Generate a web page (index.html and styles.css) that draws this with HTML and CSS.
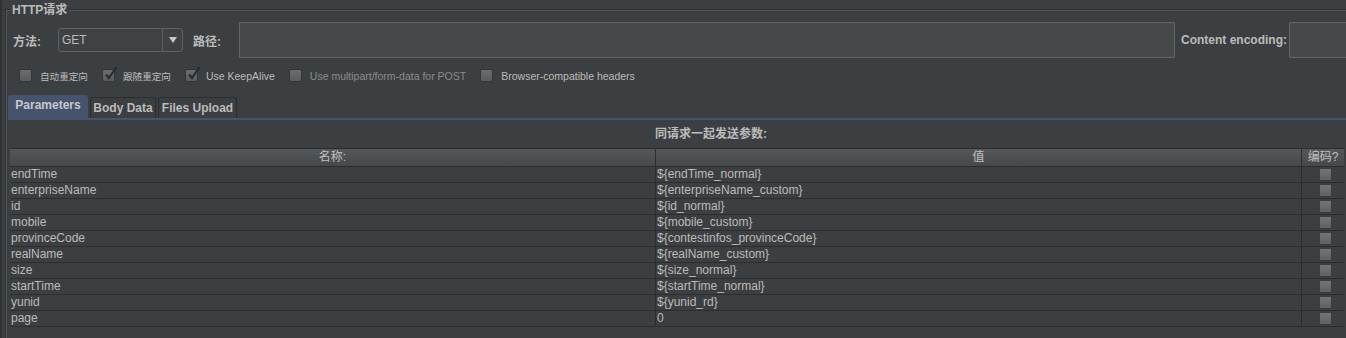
FILE: index.html
```html
<!DOCTYPE html>
<html>
<head>
<meta charset="utf-8">
<link rel="stylesheet" href="styles.css">
</head>
<body>
<div class="group">
  <div class="group-title">HTTP请求</div>
  <div class="row-req">
    <span class="lbl lbl-method">方法:</span>
    <div class="combo">
      <span class="combo-val">GET</span>
      <span class="combo-btn"><svg width="8" height="6" viewBox="0 0 8 6"><path d="M0 0 H8 L4 6 Z" fill="#c8c8c8"/></svg></span>
    </div>
    <span class="lbl lbl-path">路径:</span>
    <div class="input input-path"></div>
    <span class="lbl lbl-enc">Content encoding:</span>
    <div class="input input-enc"></div>
  </div>
  <div class="row-opts">
    <label class="opt"><span class="cb"></span><span class="opt-txt cjk">自动重定向</span></label>
    <label class="opt"><span class="cb"><svg class="chk" width="15" height="16" viewBox="0 0 15 16"><path d="M3 8.5 L6 12 L13.5 1" fill="none" stroke="#2a2b2c" stroke-width="2.2"/></svg></span><span class="opt-txt cjk">跟随重定向</span></label>
    <label class="opt"><span class="cb"><svg class="chk" width="15" height="16" viewBox="0 0 15 16"><path d="M3 8.5 L6 12 L13.5 1" fill="none" stroke="#2a2b2c" stroke-width="2.2"/></svg></span><span class="opt-txt">Use KeepAlive</span></label>
    <label class="opt"><span class="cb"></span><span class="opt-txt dis">Use multipart/form-data for POST</span></label>
    <label class="opt"><span class="cb"></span><span class="opt-txt">Browser-compatible headers</span></label>
  </div>
  <div class="tabs">
    <div class="tab sel">Parameters</div>
    <div class="tab t-body">Body Data</div>
    <div class="tab t-files">Files Upload</div>
  </div>
  <div class="tab-panel">
    <div class="panel-title">同请求一起发送参数:</div>
    <div class="table">
      <div class="th">名称:</div><div class="th">值</div><div class="th th-enc">编码?</div>

      <div class="td">endTime</div><div class="td">${endTime_normal}</div><div class="td tc"><span class="tcb"></span></div>
      <div class="td">enterpriseName</div><div class="td">${enterpriseName_custom}</div><div class="td tc"><span class="tcb"></span></div>
      <div class="td">id</div><div class="td">${id_normal}</div><div class="td tc"><span class="tcb"></span></div>
      <div class="td">mobile</div><div class="td">${mobile_custom}</div><div class="td tc"><span class="tcb"></span></div>
      <div class="td">provinceCode</div><div class="td">${contestinfos_provinceCode}</div><div class="td tc"><span class="tcb"></span></div>
      <div class="td">realName</div><div class="td">${realName_custom}</div><div class="td tc"><span class="tcb"></span></div>
      <div class="td">size</div><div class="td">${size_normal}</div><div class="td tc"><span class="tcb"></span></div>
      <div class="td">startTime</div><div class="td">${startTime_normal}</div><div class="td tc"><span class="tcb"></span></div>
      <div class="td">yunid</div><div class="td">${yunid_rd}</div><div class="td tc"><span class="tcb"></span></div>
      <div class="td">page</div><div class="td">0</div><div class="td tc"><span class="tcb"></span></div>
    </div>
  </div>
</div>
</body>
</html>
```

FILE: styles.css
```css
html, body {
  margin: 0;
  padding: 0;
}
body {
  width: 1346px;
  height: 338px;
  overflow: hidden;
  background: #3c3f41;
  color: #bbbbbb;
  font-family: "Liberation Sans", "Noto Sans CJK SC", sans-serif;
  font-size: 12px;
  box-shadow: inset 2px 0 0 #2f3133;
}
.group {
  position: relative;
  margin: 9px 0 0 5px;
  width: 1341px;
  height: 329px;
  border-top: 1px solid #2e3032;
  border-left: 1px solid #2e3032;
  box-shadow: inset 1px 1px 0 #55585a;
  box-sizing: border-box;
  padding-top: 12px;
}
.group-title {
  position: absolute;
  left: 5px;
  top: -8px;
  padding: 0 2px 0 1px;
  background: #3c3f41;
  font-weight: bold;
  font-size: 12px;
  line-height: 16px;
  color: #bbbbbb;
}
.row-req {
  display: flex;
  align-items: center;
  height: 36px;
}
.lbl {
  font-weight: bold;
  white-space: nowrap;
  flex: none;
}
.lbl-method {
  margin-left: 7px;
  width: 45px;
}
.combo {
  flex: none;
  display: flex;
  width: 125px;
  height: 24px;
  box-sizing: border-box;
  border: 1px solid #5e6163;
  border-radius: 3px;
  background: #3f4244;
}
.combo-val {
  flex: 1;
  padding-left: 3px;
  line-height: 22px;
  color: #bbbbbb;
}
.combo-btn {
  width: 19px;
  border-left: 1px solid #5e6163;
  display: flex;
  align-items: center;
  justify-content: center;
}
.lbl-path {
  margin-left: 10px;
  width: 46px;
}
.input {
  flex: none;
  height: 36px;
  box-sizing: border-box;
  border: 1px solid #646464;
  background: #45494a;
}
.input-path {
  width: 936px;
}
.lbl-enc {
  margin-left: 6px;
  width: 108px;
}
.input-enc {
  width: 58px;
  border-right: none;
}
.row-opts {
  display: flex;
  align-items: center;
  margin-top: 11px;
  height: 13px;
  padding-left: 13px;
}
.opt {
  display: flex;
  align-items: center;
  margin-right: 14px;
}
.cb {
  position: relative;
  width: 13px;
  height: 13px;
  box-sizing: border-box;
  border: 1px solid #333537;
  border-radius: 2px;
  background: linear-gradient(#6a6d6f, #5a5d5f);
}
.chk {
  position: absolute;
  left: 0;
  top: -4px;
}
.opt-txt {
  margin-left: 8px;
  font-size: 10.5px;
  color: #bbbbbb;
  white-space: nowrap;
}
.opt-txt.cjk {
  font-size: 9.6px;
}
.opt-txt.dis {
  color: #8a8c8e;
}
.tabs {
  display: flex;
  align-items: flex-end;
  margin-top: 13px;
  margin-left: 2px;
  height: 23px;
}
.tab {
  height: 21px;
  box-sizing: border-box;
  border: 1px solid #2b2d2e;
  border-bottom: none;
  border-radius: 3px 3px 0 0;
  margin-left: 2px;
  font-weight: bold;
  line-height: 21px;
  text-align: center;
  color: #bbbbbb;
}
.tab.sel {
  height: 23px;
  width: 80px;
  margin-left: 0;
  border: none;
  background: #46536c;
  line-height: 20px;
  color: #c4c8cc;
}
.t-body {
  width: 66px;
}
.t-files {
  width: 79px;
}
.tab-panel {
  margin-left: 2px;
  border-top: 2px solid #46536c;
  padding-left: 2px;
}
.panel-title {
  width: 1336px;
  box-sizing: border-box;
  padding-left: 66px;
  height: 28px;
  line-height: 28px;
  text-align: center;
  font-weight: bold;
}
.table {
  display: grid;
  grid-template-columns: 646px 646px 42px;
  grid-template-rows: 18px;
  grid-auto-rows: 16px;
  border-top: 1px solid #2b2d2e;
  width: 1334px;
}
.th {
  height: 17px;
  line-height: 17px;
  text-align: center;
  background: linear-gradient(#54585a, #46494b);
  border-bottom: 1px solid #2b2d2e;
  border-right: 1px solid #2b2d2e;
  color: #c0c0c0;
  white-space: nowrap;
}
.th-enc {
  border-right: none;
}
.td {
  height: 15px;
  line-height: 15px;
  border-bottom: 1px solid #2b2d2e;
  border-right: 1px solid #2b2d2e;
  padding-left: 1px;
  white-space: nowrap;
  overflow: hidden;
  color: #bbbbbb;
}
.tc {
  border-right: none;
  display: flex;
  justify-content: center;
  align-items: center;
  padding-left: 4px;
}
.tcb {
  flex: none;
  width: 13px;
  height: 13px;
  box-sizing: border-box;
  border: 1px solid #3a3c3e;
  border-radius: 1px;
  background: linear-gradient(#737677, #5e6163);
}
```
